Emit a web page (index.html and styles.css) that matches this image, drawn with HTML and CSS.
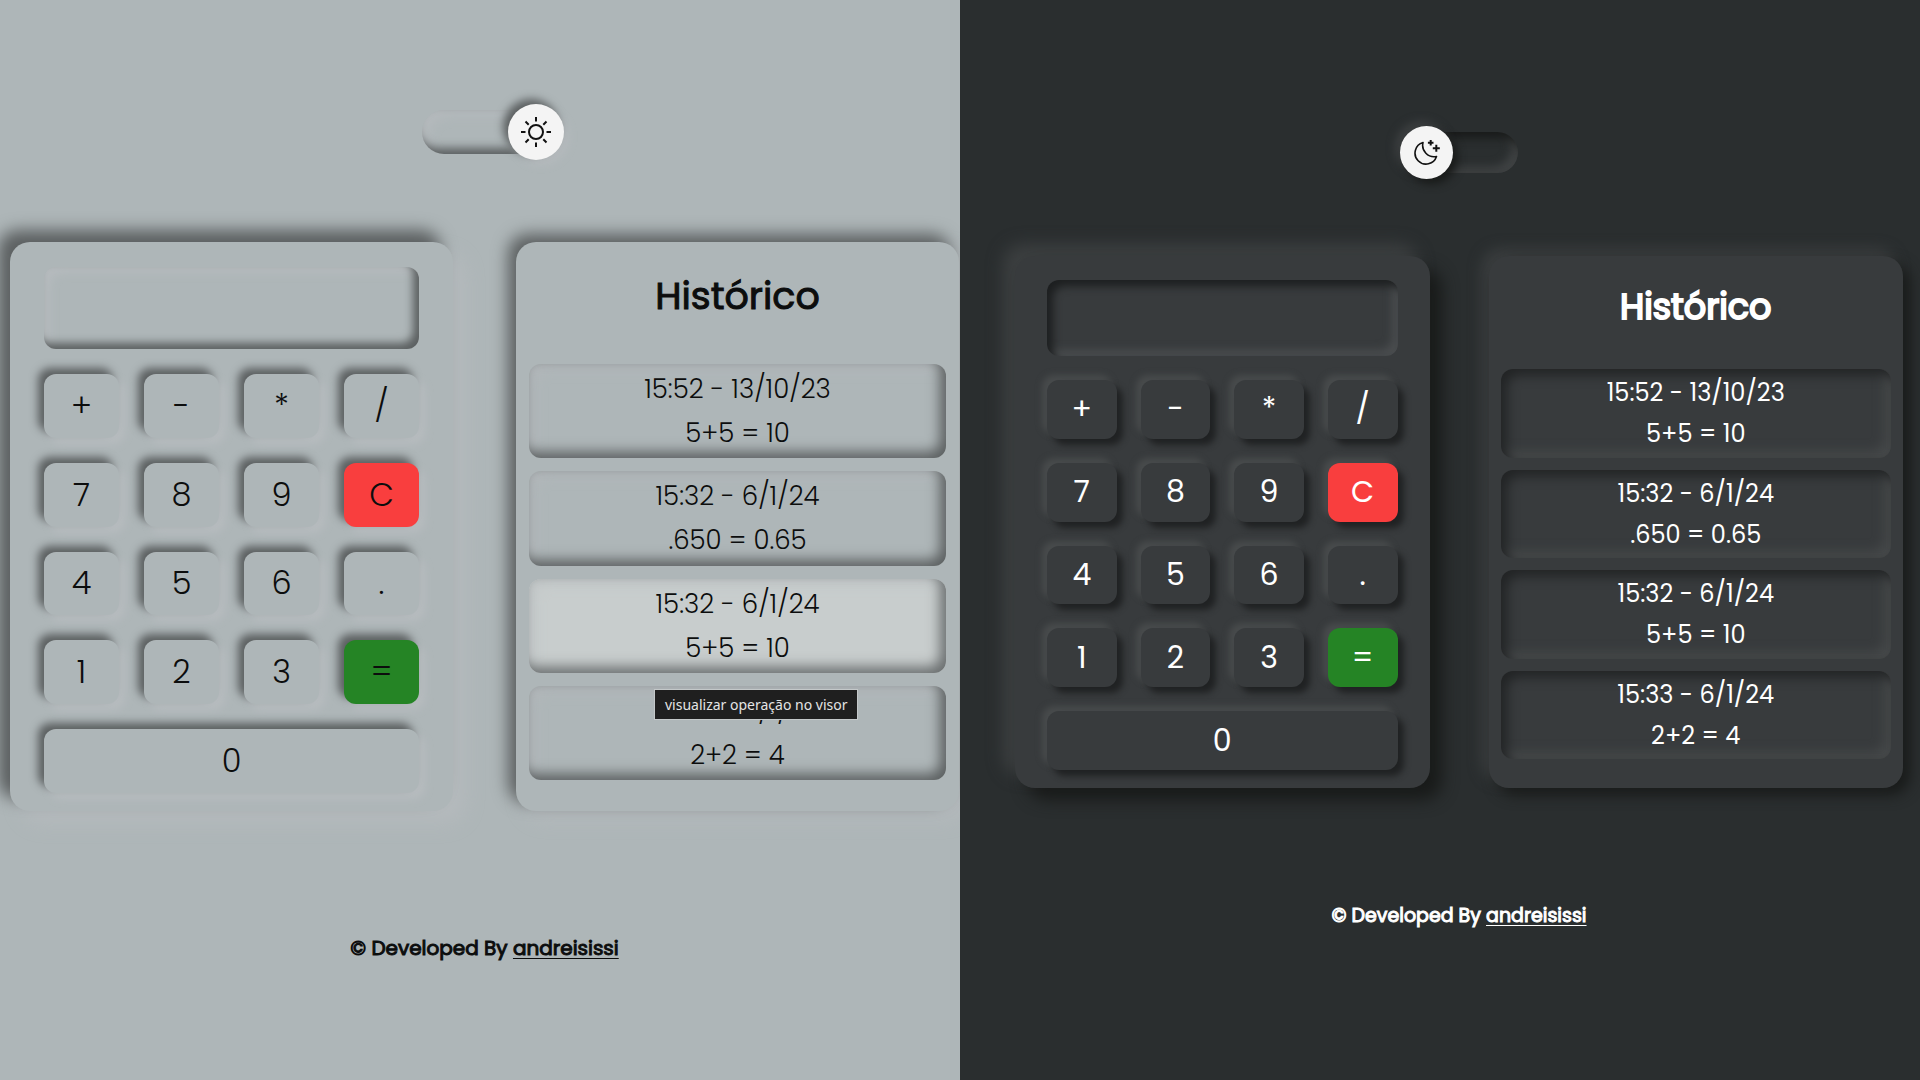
FILE: index.html
```
<!DOCTYPE html>
<html lang="pt-BR">
<head>
<meta charset="utf-8">
<meta name="viewport" content="width=device-width, initial-scale=1">
<title>Calculadora</title>
<link rel="stylesheet" href="styles.css">
</head>
<body>
<main class="themes">
  <section class="theme theme--light" aria-label="Tema claro">
    <label class="switch">
      <input class="switch__track" type="checkbox" role="switch" aria-label="Tema claro" checked>
      <span class="switch__knob">
        <svg width="30" height="30" viewBox="0 0 30 30" fill="none" stroke="#111" stroke-width="2" aria-hidden="true">
          <circle cx="15" cy="15" r="7"/>
          <path d="M15 0v4.500M15 25.500v4.500M0 15h4.500M25.500 15h4.500M4.500 4.500l3.200 3.200M22.300 22.300l3.200 3.200M4.500 25.500l3.200-3.200M22.300 7.700l3.200-3.200"/>
        </svg>
      </span>
    </label>
    <div class="cards">
      <div class="card calc">
        <input class="calc__display" type="text" aria-label="Visor" readonly>
        <div class="keys">
          <button class="key">+</button><button class="key">-</button><button class="key">*</button><button class="key">/</button>
          <button class="key">7</button><button class="key">8</button><button class="key">9</button><button class="key key--clear">C</button>
          <button class="key">4</button><button class="key">5</button><button class="key">6</button><button class="key">.</button>
          <button class="key">1</button><button class="key">2</button><button class="key">3</button><button class="key key--equals">=</button>
          <button class="key key--wide">0</button>
        </div>
      </div>
      <div class="card history">
        <h2 class="history__title">Histórico</h2>
        <ul class="history__list">
          <li class="history__row"><button class="entry"><span>15:52 - 13/10/23</span><span>5+5 = 10</span></button></li>
          <li class="history__row"><button class="entry"><span>15:32 - 6/1/24</span><span>.650 = 0.65</span></button></li>
          <li class="history__row"><button class="entry entry--active" aria-describedby="tip"><span>15:32 - 6/1/24</span><span>5+5 = 10</span></button><span class="tooltip" id="tip" role="tooltip">visualizar operação no visor</span></li>
          <li class="history__row"><button class="entry"><span>15:33 - 6/1/24</span><span>2+2 = 4</span></button></li>
        </ul>
      </div>
    </div>
    <footer class="credit">© Developed By <a class="credit__link" href="#">andreisissi</a></footer>
  </section>

  <section class="theme theme--dark" aria-label="Tema escuro">
    <label class="switch">
      <input class="switch__track" type="checkbox" role="switch" aria-label="Tema claro">
      <span class="switch__knob">
        <svg width="28" height="26" viewBox="0 0 28 26" fill="none" stroke="#111" stroke-width="1.600" stroke-linejoin="round" aria-hidden="true">
          <path d="M10 2.500A11 11 0 1 0 23.500 16.500A11.500 11.500 0 0 1 10 2.500Z"/>
          <path stroke-width="2" d="M17.700 0v5.600M14.900 2.800h5.600M23.300 4.800v7M19.800 8.300h7"/>
        </svg>
      </span>
    </label>
    <div class="cards">
      <div class="card calc">
        <input class="calc__display" type="text" aria-label="Visor" readonly>
        <div class="keys">
          <button class="key">+</button><button class="key">-</button><button class="key">*</button><button class="key">/</button>
          <button class="key">7</button><button class="key">8</button><button class="key">9</button><button class="key key--clear">C</button>
          <button class="key">4</button><button class="key">5</button><button class="key">6</button><button class="key">.</button>
          <button class="key">1</button><button class="key">2</button><button class="key">3</button><button class="key key--equals">=</button>
          <button class="key key--wide">0</button>
        </div>
      </div>
      <div class="card history">
        <h2 class="history__title">Histórico</h2>
        <ul class="history__list">
          <li class="history__row"><button class="entry"><span>15:52 - 13/10/23</span><span>5+5 = 10</span></button></li>
          <li class="history__row"><button class="entry"><span>15:32 - 6/1/24</span><span>.650 = 0.65</span></button></li>
          <li class="history__row"><button class="entry"><span>15:32 - 6/1/24</span><span>5+5 = 10</span></button></li>
          <li class="history__row"><button class="entry"><span>15:33 - 6/1/24</span><span>2+2 = 4</span></button></li>
        </ul>
      </div>
    </div>
    <footer class="credit">© Developed By <a class="credit__link" href="#">andreisissi</a></footer>
  </section>
</main>
</body>
</html>
```
FILE: styles.css
```
*, *::before, *::after { box-sizing: border-box; }

body {
  margin: 0;
  font-family: "Poppins", "Inter", sans-serif;
}

.themes {
  display: grid;
  grid-template-columns: 1fr 1fr;
  min-height: 100vh;
}

.theme {
  min-width: 0;
  display: flex;
  flex-direction: column;
  align-items: center;
  overflow: hidden;
  background: var(--page);
  color: var(--ink);
}

.theme--light {
  --page: #aeb6b8;
  --surface: #aeb6b8;
  --ink: #0c0d0d;
  --card-shadow: -12px -12px 16px #5c6061, 12px 12px 20px #b5babd;
  --history-shadow: -8px -8px 16px #5c6061, 8px 8px 20px #b5babd;
  --key-shadow: -6px -6px 8px #5c6061, 6px 6px 8px #b7bcbf;
  --display-shadow: inset -6px -6px 8px #5c6061, inset 6px 6px 10px #b6bbbe;
  --entry-shadow: inset -6px -6px 13px #5c6061, inset 6px 6px 13px #b3b8bb;
  --knob-shadow: -5px -5px 9px #5c6061, 5px 5px 9px #b5babd;
  --track-shadow: inset -6px -6px 10px #5c6061, inset 6px 6px 12px #b5babd;
  --weight: 300;
  --title-stroke: 1px;
  --key-size: 32px;
  --entry-size: 26px;
  --entry-line: 44px;
  --title-size: 38px;
  --title-line: 108px;
  --title-gap: 14px;
  --credit-size: 20px;
  --display-height: 82px;
  --gap: 25px;
  --side: 34px;
  --card-height: 569px;
  --list-gap: 13px;
  --list-bottom: 31px;
  --track-width: 126px;
  --track-height: 44px;
  --knob: 56px;
  padding: 110px 1px 0 10px;
}

.theme--dark {
  --page: #2a2e2f;
  --surface: #383b3d;
  --ink: #fff;
  --card-shadow: 12px 12px 16px #191b1a, -12px -12px 16px #3c3f40;
  --history-shadow: 7px 7px 14px #191b1a, -7px -7px 14px #3c3f40;
  --key-shadow: 6px 6px 6px #202223, -5px -5px 6px #484b4c;
  --display-shadow: inset 6px 6px 8px #1d1f20, inset -6px -6px 8px #4a4d4f;
  --entry-shadow: inset 6px 6px 12px #222425, inset -6px -6px 12px #484b4c;
  --knob-shadow: 5px 5px 9px #191b1a, -5px -5px 9px #3c3f40;
  --track-shadow: inset 6px 6px 10px #191b1a, inset -6px -6px 10px #404344;
  --weight: 400;
  --title-stroke: 2px;
  --key-size: 30px;
  --entry-size: 24px;
  --entry-line: 41px;
  --title-size: 35px;
  --title-line: 101px;
  --title-gap: 12px;
  --credit-size: 19px;
  --display-height: 76px;
  --gap: 24px;
  --side: 32px;
  --card-height: 532px;
  --list-gap: 12px;
  --list-bottom: 29px;
  --track-width: 118px;
  --track-height: 41px;
  --knob: 53px;
  padding: 132px 17px 0 55px;
}

/* Theme switch */
.switch {
  position: relative;
  width: var(--track-width);
  height: var(--track-height);
}

.switch__track {
  appearance: none;
  display: block;
  width: 100%;
  height: 100%;
  margin: 0;
  border-radius: 24px;
  box-shadow: var(--track-shadow);
}

.switch__knob {
  position: absolute;
  top: -6px;
  left: 0;
  display: flex;
  align-items: center;
  justify-content: center;
  width: var(--knob);
  height: var(--knob);
  border-radius: 50%;
  background: #f4f4f4;
  box-shadow: var(--knob-shadow);
}

.switch__track:checked + .switch__knob {
  left: auto;
  right: -16px;
}

/* Cards */
.cards {
  align-self: stretch;
  display: grid;
  grid-template-columns: 1fr 1fr;
}

.theme--light .cards { gap: 63px; margin-top: 88px; }
.theme--dark .cards { gap: 59px; margin-top: 83px; }

.card {
  display: flex;
  flex-direction: column;
  min-height: var(--card-height);
  border-radius: 20px;
  background: var(--surface);
}

.calc {
  gap: var(--gap);
  padding: var(--gap) var(--side) 18px;
  box-shadow: var(--card-shadow);
}

.calc__display {
  width: 100%;
  height: var(--display-height);
  padding: 0 16px;
  border: 0;
  border-radius: 12px;
  outline: 0;
  background: none;
  color: inherit;
  font: inherit;
  font-size: var(--key-size);
  text-align: right;
  box-shadow: var(--display-shadow);
}

.keys {
  flex: 1;
  display: grid;
  grid-template-columns: repeat(4, 1fr);
  grid-auto-rows: 1fr;
  gap: var(--gap);
}

.key {
  min-width: 0;
  padding: 0;
  border: 0;
  border-radius: 12px;
  background: var(--surface);
  color: inherit;
  font-family: inherit;
  font-size: var(--key-size);
  font-weight: var(--weight);
  line-height: 40px;
  box-shadow: var(--key-shadow);
}

.key--clear { background: #f93e3e; }
.key--equals { background: #258425; }
.key--wide { grid-column: 1 / -1; }

/* History */
.history {
  padding: 0 var(--list-gap) var(--list-bottom);
  box-shadow: var(--history-shadow);
}

.history__title {
  margin: 0 0 var(--title-gap);
  font-size: var(--title-size);
  font-weight: 400;
  line-height: var(--title-line);
  text-align: center;
  -webkit-text-stroke: var(--title-stroke) currentColor;
}

.history__list {
  flex: 1;
  display: grid;
  grid-auto-rows: 1fr;
  gap: var(--list-gap);
  margin: 0;
  padding: 0;
  list-style: none;
}

.history__row {
  position: relative;
  display: flex;
}

.entry {
  flex: 1;
  display: flex;
  flex-direction: column;
  align-items: center;
  padding: 3px 0;
  border: 0;
  border-radius: 12px;
  background: none;
  color: inherit;
  font-family: inherit;
  font-size: var(--entry-size);
  font-weight: var(--weight);
  line-height: var(--entry-line);
  box-shadow: var(--entry-shadow);
}

.entry--active {
  background: #c8cdcd;
  --entry-shadow: inset -6px -6px 13px #6b6f70, inset 6px 6px 13px #c3c8c9;
}

.tooltip {
  position: absolute;
  z-index: 1;
  top: 110px;
  left: 125px;
  padding: 0 10px;
  border: 1px solid #c4c8c9;
  background: #1f1f1f;
  color: #e4e4e4;
  font: 14px/29px "Noto Sans", sans-serif;
  white-space: nowrap;
}

/* Footer */
.credit {
  font-size: var(--credit-size);
  font-weight: 400;
  line-height: 30px;
  -webkit-text-stroke: 1px currentColor;
}

.theme--light .credit { margin-top: 122px; }
.theme--dark .credit { margin-top: 113px; }

.credit__link {
  color: inherit;
  text-decoration-thickness: 1px;
  text-underline-offset: 3px;
}
```
